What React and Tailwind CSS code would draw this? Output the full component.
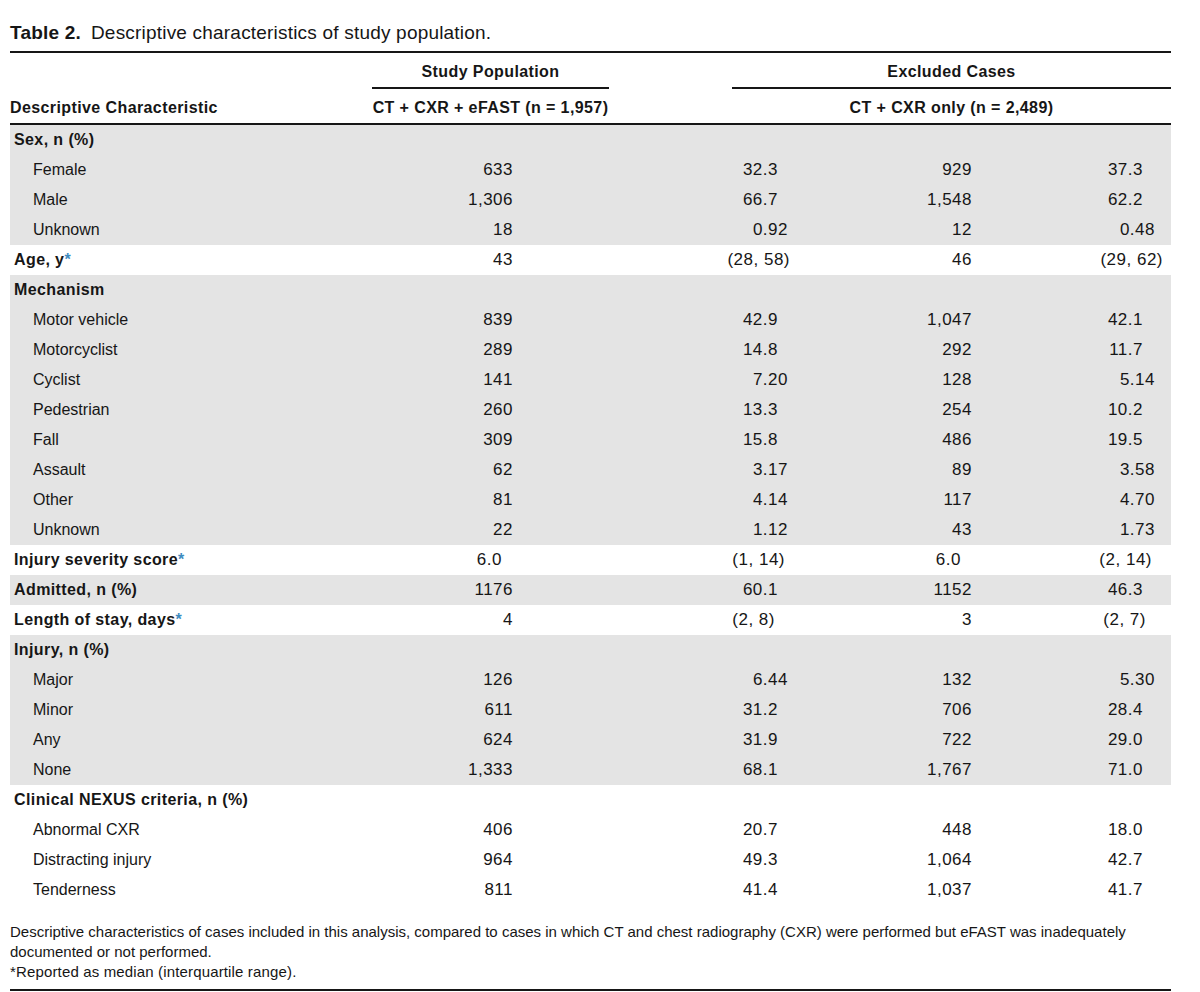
import React from "react";

const PR = {
  0: "pr-0",
  2: "pr-[2px]",
  5: "pr-[5px]",
  8: "pr-[8px]",
  11: "pr-[11px]",
  12: "pr-[12px]",
  15: "pr-[15px]",
  17: "pr-[17px]",
  20: "pr-[20px]",
};

const PAREN = {
  "(28, 58)": 0,
  "(1, 14)": 5,
  "(2, 8)": 15,
  "(29, 62)": 0,
  "(2, 14)": 11,
  "(2, 7)": 17,
};

function offset(col, v) {
  if (col === 0 || col === 2) return v.includes(".") ? 11 : 0;
  if (v.startsWith("(")) return PAREN[v] ?? 0;
  const dec = v.includes(".") ? v.split(".")[1].length : 0;
  if (col === 1) return dec === 2 ? 2 : 12;
  return dec === 2 ? 8 : 20;
}

const rows = [
  { h: "Sex, n (%)", g: true },
  { l: "Female", v: ["633", "32.3", "929", "37.3"], g: true },
  { l: "Male", v: ["1,306", "66.7", "1,548", "62.2"], g: true },
  { l: "Unknown", v: ["18", "0.92", "12", "0.48"], g: true },
  { h: "Age, y", star: true, v: ["43", "(28, 58)", "46", "(29, 62)"], g: false },
  { h: "Mechanism", g: true },
  { l: "Motor vehicle", v: ["839", "42.9", "1,047", "42.1"], g: true },
  { l: "Motorcyclist", v: ["289", "14.8", "292", "11.7"], g: true },
  { l: "Cyclist", v: ["141", "7.20", "128", "5.14"], g: true },
  { l: "Pedestrian", v: ["260", "13.3", "254", "10.2"], g: true },
  { l: "Fall", v: ["309", "15.8", "486", "19.5"], g: true },
  { l: "Assault", v: ["62", "3.17", "89", "3.58"], g: true },
  { l: "Other", v: ["81", "4.14", "117", "4.70"], g: true },
  { l: "Unknown", v: ["22", "1.12", "43", "1.73"], g: true },
  { h: "Injury severity score", star: true, v: ["6.0", "(1, 14)", "6.0", "(2, 14)"], g: false },
  { h: "Admitted, n (%)", v: ["1176", "60.1", "1152", "46.3"], g: true },
  { h: "Length of stay, days", star: true, v: ["4", "(2, 8)", "3", "(2, 7)"], g: false },
  { h: "Injury, n (%)", g: true },
  { l: "Major", v: ["126", "6.44", "132", "5.30"], g: true },
  { l: "Minor", v: ["611", "31.2", "706", "28.4"], g: true },
  { l: "Any", v: ["624", "31.9", "722", "29.0"], g: true },
  { l: "None", v: ["1,333", "68.1", "1,767", "71.0"], g: true },
  { h: "Clinical NEXUS criteria, n (%)", g: false },
  { l: "Abnormal CXR", v: ["406", "20.7", "448", "18.0"], g: false },
  { l: "Distracting injury", v: ["964", "49.3", "1,064", "42.7"], g: false },
  { l: "Tenderness", v: ["811", "41.4", "1,037", "41.7"], g: false },
];

function Row({ r }) {
  return (
    <div
      className={
        "grid grid-cols-[390px_113px_277px_182px_191px_8px] h-[30px] items-center " +
        (r.g ? "bg-[#e4e4e4]" : "bg-white")
      }
    >
      {r.h ? (
        <div className="pl-[4px] text-[16px] font-bold tracking-[0.4px] whitespace-nowrap">
          {r.h}
          {r.star && <span className="text-[#3f8cc0]">*</span>}
        </div>
      ) : (
        <div className="pl-[23px] text-[16px] whitespace-nowrap">{r.l}</div>
      )}
      {[0, 1, 2, 3].map((i) => (
        <div
          key={i}
          className={"text-right text-[17px] tracking-[0.5px] whitespace-nowrap " + (r.v ? PR[offset(i, r.v[i])] : "")}
        >
          {r.v ? r.v[i] : ""}
        </div>
      ))}
      <div />
    </div>
  );
}

export default function App() {
  return (
    <div className="w-[1200px] h-[992px] bg-white text-[#161616] font-['Liberation_Sans',Arial,sans-serif] overflow-hidden">
      <div className="ml-[10px] w-[1161px] pt-[21px]">
        <div className="h-[24px] leading-[24px] text-[19px] tracking-[0.2px] whitespace-nowrap">
          <span className="font-bold">Table 2.</span>
          <span className="ml-[10px]">Descriptive characteristics of study population.</span>
        </div>
        <div className="h-[2px] bg-[#161616] mt-[6px]" />
        <div className="grid grid-cols-[362px_237px_123px_439px]">
          <div className="h-[36px]" />
          <div className="h-[36px] pt-[4px] border-b-2 border-[#161616] flex items-center justify-center text-[16px] font-bold tracking-[0.4px]">
            Study Population
          </div>
          <div className="h-[36px]" />
          <div className="h-[36px] pt-[4px] border-b-2 border-[#161616] flex items-center justify-center text-[16px] font-bold tracking-[0.4px]">
            Excluded Cases
          </div>
          <div className="h-[34px] pt-[3px] flex items-center text-[16px] font-bold tracking-[0.4px] whitespace-nowrap">
            Descriptive Characteristic
          </div>
          <div className="h-[34px] pt-[3px] flex items-center justify-center text-[16px] font-bold tracking-[0.4px] whitespace-nowrap">
            CT + CXR + eFAST (n = 1,957)
          </div>
          <div className="h-[34px]" />
          <div className="h-[34px] pt-[3px] flex items-center justify-center text-[16px] font-bold tracking-[0.4px] whitespace-nowrap">
            CT + CXR only (n = 2,489)
          </div>
        </div>
        <div className="h-[2px] bg-[#161616]" />
        <div className="flex flex-col">
          {rows.map((r, i) => (
            <Row key={i} r={r} />
          ))}
        </div>
        <div className="mt-[17px] text-[15px] leading-[20px]">
          <div className="whitespace-nowrap">
            Descriptive characteristics of cases included in this analysis, compared to cases in which CT and chest radiography (CXR) were performed but eFAST was inadequately
          </div>
          <div>documented or not performed.</div>
          <div className="tracking-[0.15px]">*Reported as median (interquartile range).</div>
        </div>
        <div className="h-[2px] bg-[#161616] mt-[7px]" />
      </div>
    </div>
  );
}
